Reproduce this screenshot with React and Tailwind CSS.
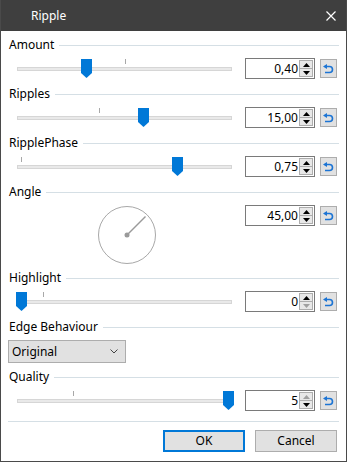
import React from 'react'

const font = "font-['Noto_Sans','Open_Sans',sans-serif]"

function Header({ label }) {
  return (
    <div className="flex h-[14px] items-center">
      <span className="ml-[1px] text-[12px] leading-[14px] text-black">{label}</span>
      <div className="ml-[5px] h-px flex-1 bg-[#d5dfe5]" />
    </div>
  )
}

function Slider({ thumb, tick }) {
  return (
    <div className="relative ml-[9px] h-[21px] w-[215px]">
      <div className={`absolute top-[1px] h-[5px] w-px bg-[#a8a8a8] ${tick}`} />
      <div className="absolute left-0 right-0 top-[9px] h-[4px] border border-[#d6d6d6] bg-[#e9e9e9]" />
      <svg className={`absolute top-[1px] ${thumb}`} width="11" height="19" viewBox="0 0 11 19">
        <polygon points="0,0 11,0 11,14 5.5,19 0,14" fill="#0078d7" />
      </svg>
    </div>
  )
}

function Tri({ up, off }) {
  const c = off ? '#a0a0a0' : '#000'
  return (
    <svg width="7" height="4" viewBox="0 0 7 4">
      <polygon points={up ? '3.5,0 7,4 0,4' : '0,0 7,0 3.5,4'} fill={c} />
    </svg>
  )
}

function NumBox({ value, upOff, downOff }) {
  return (
    <div className="ml-[13px] flex h-[21px] w-[70px] items-center justify-end border border-[#7a7a7a] bg-white pr-[1px]">
      <span className="mr-[1px] text-[12px] leading-[14px] text-black">{value}</span>
      <div className="flex h-[17px] w-[14px] flex-col border border-[#adadad] bg-[#e8e8e8]">
        <div className="flex flex-1 items-center justify-center border-b border-[#adadad]">
          <Tri up off={upOff} />
        </div>
        <div className="flex flex-1 items-center justify-center">
          <Tri off={downOff} />
        </div>
      </div>
    </div>
  )
}

function Reset() {
  return (
    <button className="ml-[5px] mt-[1px] flex h-[19px] w-[17px] items-center justify-center border border-[#adadad] bg-[#e1e1e1]">
      <svg width="11" height="10" viewBox="0 0 11 10">
        <path d="M3.5 2.5 H6.5 A3 3 0 0 1 6.5 8.5 H2" stroke="#1c74d4" strokeWidth="1.6" fill="none" />
        <polygon points="0,2.5 4,0 4,5" fill="#1c74d4" />
      </svg>
    </button>
  )
}

function SliderRow({ label, value, thumb, tick, upOff, downOff, className }) {
  return (
    <div className={className}>
      <Header label={label} />
      <div className="mt-[6px] flex items-start">
        <Slider thumb={thumb} tick={tick} />
        <NumBox value={value} upOff={upOff} downOff={downOff} />
        <Reset />
      </div>
    </div>
  )
}

export default function App() {
  return (
    <div className={`${font} flex h-[462px] w-[347px] flex-col border-x border-b border-[#4a4a4a] bg-white`}>
      <div className="flex h-[31px] shrink-0 items-center justify-between bg-[#3f3f3f] pl-[30px] pr-[10px]">
        <span className="text-[12px] leading-[14px] text-white">Ripple</span>
        <svg width="10" height="10" viewBox="0 0 10 10">
          <path d="M0.5 0.5 L9.5 9.5 M9.5 0.5 L0.5 9.5" stroke="#fff" strokeWidth="1.2" />
        </svg>
      </div>

      <div className="flex flex-col px-[7px] pt-[7px]">
        <SliderRow label="Amount" value="0,40" thumb="left-[64px]" tick="left-[108px]" />
        <SliderRow className="mt-[8px]" label="Ripples" value="15,00" thumb="left-[121px]" tick="left-[82px]" />
        <SliderRow className="mt-[8px]" label="RipplePhase" value="0,75" thumb="left-[155px]" tick="left-[4px]" />

        <div className="mt-[8px]">
          <Header label="Angle" />
          <div className="mt-[6px] flex items-start">
            <div className="w-[224px]">
              <svg className="ml-[89px]" width="60" height="60" viewBox="0 0 60 60">
                <circle cx="30" cy="30" r="28.5" fill="none" stroke="#a8a8a8" strokeWidth="1" />
                <line x1="30" y1="30" x2="48.5" y2="11.5" stroke="#9a9a9a" strokeWidth="1.5" />
                <circle cx="30" cy="30" r="2.5" fill="#9a9a9a" />
              </svg>
            </div>
            <NumBox value="45,00" />
            <Reset />
          </div>
        </div>

        <SliderRow className="mt-[6px]" label="Highlight" value="0" thumb="-left-[1px]" tick="left-[26px]" downOff />

        <div className="mt-[8px]">
          <Header label="Edge Behaviour" />
          <div className="mt-[6px] flex h-[23px] w-[118px] items-center justify-between border border-[#adadad] bg-[#e1e1e1] pl-[3px] pr-[7px]">
            <span className="text-[12px] leading-[14px] text-black">Original</span>
            <svg width="8" height="5" viewBox="0 0 8 5">
              <path d="M0.5 0.5 L4 4 L7.5 0.5" stroke="#444" strokeWidth="1" fill="none" />
            </svg>
          </div>
        </div>

        <SliderRow className="mt-[7px]" label="Quality" value="5" thumb="left-[206px]" tick="left-[56px]" upOff />

        <div className="mt-[10px] h-px bg-[#d5dfe5]" />

        <div className="mt-[8px] flex justify-end gap-[10px] pr-[2px]">
          <button className="h-[22px] w-[82px] border-2 border-[#0078d7] bg-[#e1e1e1] text-[12px] leading-[14px] text-black">OK</button>
          <button className="h-[22px] w-[82px] border border-[#adadad] bg-[#e1e1e1] text-[12px] leading-[14px] text-black">Cancel</button>
        </div>
      </div>
    </div>
  )
}
